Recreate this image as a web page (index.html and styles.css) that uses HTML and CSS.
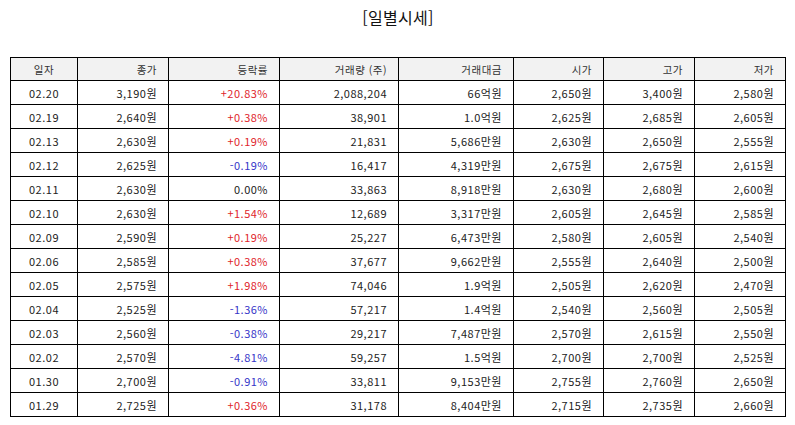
FILE: index.html
```html
<!DOCTYPE html>
<html lang="ko">
<head>
<meta charset="utf-8">
<title>일별시세</title>
<link rel="stylesheet" href="styles.css">
</head>
<body>
<div class="page">
  <h1 class="title">[일별시세]</h1>
  <table class="quotes">
    <colgroup>
      <col class="c-date"><col class="c-close"><col class="c-rate"><col class="c-vol">
      <col class="c-amt"><col class="c-open"><col class="c-high"><col class="c-low">
    </colgroup>
    <thead>
      <tr>
        <th class="center">일자</th><th>종가</th><th>등락률</th><th>거래량 (주)</th>
        <th>거래대금</th><th>시가</th><th>고가</th><th>저가</th>
      </tr>
    </thead>
    <tbody>
      <tr><td class="center">02.20</td><td>3,190원</td><td class="up">+20.83%</td><td>2,088,204</td><td>66억원</td><td>2,650원</td><td>3,400원</td><td>2,580원</td></tr>
      <tr><td class="center">02.19</td><td>2,640원</td><td class="up">+0.38%</td><td>38,901</td><td>1.0억원</td><td>2,625원</td><td>2,685원</td><td>2,605원</td></tr>
      <tr><td class="center">02.13</td><td>2,630원</td><td class="up">+0.19%</td><td>21,831</td><td>5,686만원</td><td>2,630원</td><td>2,650원</td><td>2,555원</td></tr>
      <tr><td class="center">02.12</td><td>2,625원</td><td class="down">-0.19%</td><td>16,417</td><td>4,319만원</td><td>2,675원</td><td>2,675원</td><td>2,615원</td></tr>
      <tr><td class="center">02.11</td><td>2,630원</td><td>0.00%</td><td>33,863</td><td>8,918만원</td><td>2,630원</td><td>2,680원</td><td>2,600원</td></tr>
      <tr><td class="center">02.10</td><td>2,630원</td><td class="up">+1.54%</td><td>12,689</td><td>3,317만원</td><td>2,605원</td><td>2,645원</td><td>2,585원</td></tr>
      <tr><td class="center">02.09</td><td>2,590원</td><td class="up">+0.19%</td><td>25,227</td><td>6,473만원</td><td>2,580원</td><td>2,605원</td><td>2,540원</td></tr>
      <tr><td class="center">02.06</td><td>2,585원</td><td class="up">+0.38%</td><td>37,677</td><td>9,662만원</td><td>2,555원</td><td>2,640원</td><td>2,500원</td></tr>
      <tr><td class="center">02.05</td><td>2,575원</td><td class="up">+1.98%</td><td>74,046</td><td>1.9억원</td><td>2,505원</td><td>2,620원</td><td>2,470원</td></tr>
      <tr><td class="center">02.04</td><td>2,525원</td><td class="down">-1.36%</td><td>57,217</td><td>1.4억원</td><td>2,540원</td><td>2,560원</td><td>2,505원</td></tr>
      <tr><td class="center">02.03</td><td>2,560원</td><td class="down">-0.38%</td><td>29,217</td><td>7,487만원</td><td>2,570원</td><td>2,615원</td><td>2,550원</td></tr>
      <tr><td class="center">02.02</td><td>2,570원</td><td class="down">-4.81%</td><td>59,257</td><td>1.5억원</td><td>2,700원</td><td>2,700원</td><td>2,525원</td></tr>
      <tr><td class="center">01.30</td><td>2,700원</td><td class="down">-0.91%</td><td>33,811</td><td>9,153만원</td><td>2,755원</td><td>2,760원</td><td>2,650원</td></tr>
      <tr><td class="center">01.29</td><td>2,725원</td><td class="up">+0.36%</td><td>31,178</td><td>8,404만원</td><td>2,715원</td><td>2,735원</td><td>2,660원</td></tr>
    </tbody>
  </table>
</div>
</body>
</html>
```

FILE: styles.css
```css
html, body {
  margin: 0;
  padding: 0;
  background: #fff;
}

body {
  font-family: "Noto Sans CJK KR", "Noto Sans", sans-serif;
  color: #222;
}

.page {
  padding: 6px 9px 0 10px;
}

.title {
  margin: 0;
  text-align: center;
  font-size: 16px;
  font-weight: 400;
  line-height: 22px;
  letter-spacing: 0.3px;
  color: #111;
}

.quotes {
  margin-top: 29px;
  width: 776px;
  border-collapse: collapse;
  table-layout: fixed;
  font-size: 11px;
  letter-spacing: 0.5px;
}

.c-date { width: 67px; }
.c-close { width: 91px; }
.c-rate { width: 111px; }
.c-vol { width: 119px; }
.c-amt { width: 115px; }
.c-open { width: 90px; }
.c-high { width: 91px; }
.c-low { width: 91px; }

.quotes th,
.quotes td {
  border: 1px solid #000;
  padding: 0 11px 0 6px;
  text-align: right;
  font-weight: 400;
  white-space: nowrap;
}

.quotes th {
  height: 22px;
  background: #f2f2f2;
  color: #333;
  font-size: 10.5px;
}

.quotes td {
  height: 23px;
  color: #222;
}

.quotes .center {
  text-align: center;
  padding: 0;
}

.quotes .up { color: #e0242b; }
.quotes .down { color: #3535c8; }
```
